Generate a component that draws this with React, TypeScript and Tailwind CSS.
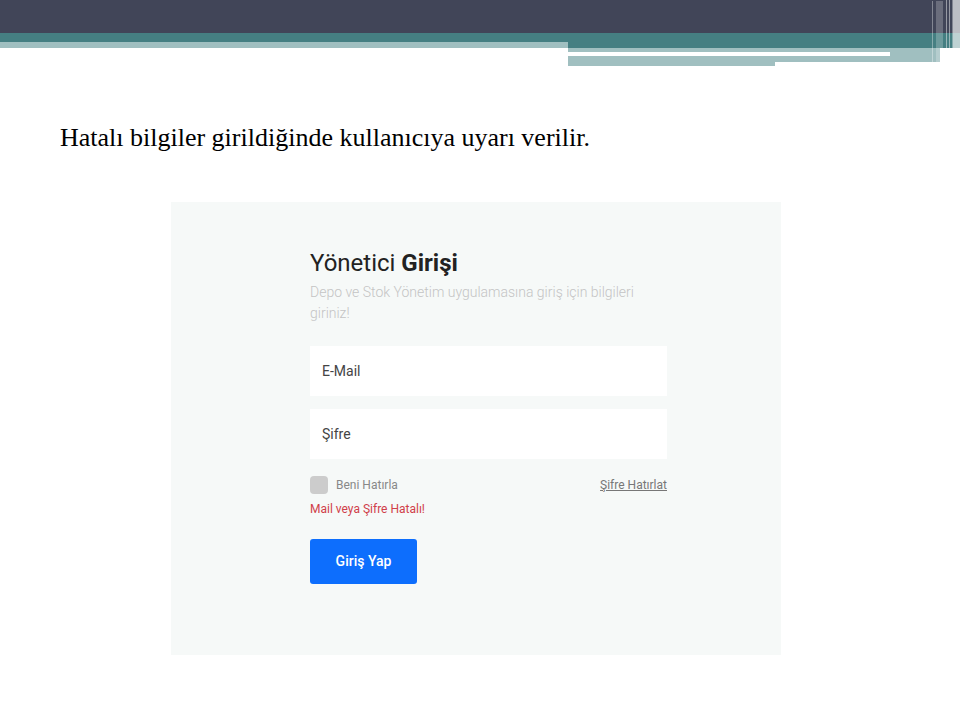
import React from 'react';

const HeaderDecoration: React.FC = () => (
  <svg width="960" height="66" viewBox="0 0 960 66" className="block">
    <rect x="0" y="0" width="960" height="33" fill="#414558" />
    <rect x="0" y="33" width="960" height="15" fill="#457f82" />
    <rect x="0" y="42" width="568" height="6" fill="#a0bfc0" />
    <rect x="568" y="48" width="372" height="18" fill="#a0bfc0" />
    <rect x="568" y="52" width="322" height="4" fill="#ffffff" />
    <rect x="775" y="62" width="168" height="4" fill="#ffffff" />
    {/* vertical strokes on the right edge */}
    <rect x="932" y="1" width="1" height="61" fill="#ffffff" fillOpacity="0.35" />
    <rect x="936" y="1" width="7" height="61" fill="#ffffff" fillOpacity="0.22" />
    <rect x="946" y="0" width="1" height="66" fill="#ffffff" fillOpacity="0.45" />
    <rect x="949" y="0" width="1" height="66" fill="#ffffff" fillOpacity="0.45" />
    <rect x="952" y="0" width="1" height="66" fill="#ffffff" fillOpacity="0.35" />
    <rect x="953" y="0" width="7" height="66" fill="#ffffff" fillOpacity="0.65" />
  </svg>
);

const LoginPanel: React.FC = () => (
  <div className="ml-[171px] w-[610px] h-[453px] bg-[#f6f9f8] pl-[139px] pt-[45px] font-['Roboto',sans-serif]">
    <div className="w-[357px]">
      <h1 className="text-[24px] leading-[32px] text-[#222]">
        Yönetici <span className="font-bold">Girişi</span>
      </h1>
      <p className="mt-[3px] w-[345px] text-[14px] leading-[21px] text-[#c4c4c4] font-light">
        Depo ve Stok Yönetim uygulamasına giriş için bilgileri giriniz!
      </p>

      <div className="mt-[22px] flex flex-col gap-[13px]">
        <div className="h-[50px] bg-white flex items-center px-3 text-[14px] text-[#444]">E-Mail</div>
        <div className="h-[50px] bg-white flex items-center px-3 text-[14px] text-[#444]">Şifre</div>
      </div>

      <div className="mt-[17px] h-[18px] flex items-center justify-between">
        <div className="flex items-center gap-2">
          <span className="w-[18px] h-[18px] rounded-[4px] bg-[#cccccc]" />
          <span className="text-[12px] text-[#888]">Beni Hatırla</span>
        </div>
        <a href="#" className="text-[12px] text-[#777] underline">Şifre Hatırlat</a>
      </div>

      <div className="mt-[7px] text-[12px] leading-[16px] text-[#d0404a]">Mail veya Şifre Hatalı!</div>

      <button className="mt-[22px] w-[107px] h-[45px] rounded-[3px] bg-[#0d6efd] text-white text-[14px] font-medium">
        Giriş Yap
      </button>
    </div>
  </div>
);

export default function App() {
  return (
    <div className="w-[960px] h-[720px] bg-white overflow-hidden">
      <HeaderDecoration />
      <p className="mt-[56px] pl-[60px] text-[26px] leading-[32px] text-black font-['Liberation_Serif',serif]">
        Hatalı bilgiler girildiğinde kullanıcıya uyarı verilir.
      </p>
      <div className="mt-[48px]">
        <LoginPanel />
      </div>
    </div>
  );
}
